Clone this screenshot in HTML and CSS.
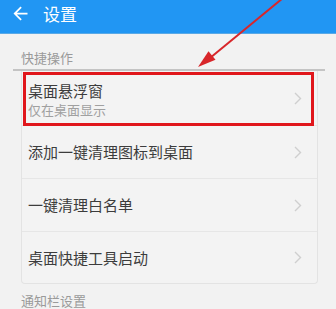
FILE: index.html
```html
<!DOCTYPE html>
<html lang="zh">
<head>
<meta charset="utf-8">
<link rel="stylesheet" href="styles.css">
</head>
<body>
<div class="page">
  <header class="topbar">
    <svg class="back" viewBox="0 0 24 24" width="21" height="21"><path d="M20 11H7.83l5.59-5.59L12 4l-8 8 8 8 1.41-1.41L7.83 13H20v-2z" fill="#fff"/></svg>
    <span class="title">设置</span>
  </header>
  <div class="section-label">快捷操作</div>
  <div class="group">
    <div class="card">
      <div class="item item-first">
        <div class="texts">
          <div class="item-title">桌面悬浮窗</div>
          <div class="item-sub">仅在桌面显示</div>
        </div>
        <svg class="chev" viewBox="0 0 8 13" width="8" height="13"><path d="M1 1l5.5 5.5L1 12" fill="none" stroke="#cfcfcf" stroke-width="1.4"/></svg>
        <div class="highlight"></div>
      </div>
      <div class="item">
        <div class="item-title">添加一键清理图标到桌面</div>
        <svg class="chev" viewBox="0 0 8 13" width="8" height="13"><path d="M1 1l5.5 5.5L1 12" fill="none" stroke="#cfcfcf" stroke-width="1.4"/></svg>
      </div>
      <div class="item">
        <div class="item-title">一键清理白名单</div>
        <svg class="chev" viewBox="0 0 8 13" width="8" height="13"><path d="M1 1l5.5 5.5L1 12" fill="none" stroke="#cfcfcf" stroke-width="1.4"/></svg>
      </div>
      <div class="item item-last">
        <div class="item-title">桌面快捷工具启动</div>
        <svg class="chev" viewBox="0 0 8 13" width="8" height="13"><path d="M1 1l5.5 5.5L1 12" fill="none" stroke="#cfcfcf" stroke-width="1.4"/></svg>
      </div>
    </div>
  </div>
  <div class="section-label section-label-2">通知栏设置</div>
  <svg class="annot" viewBox="0 0 336 309" width="336" height="309">
    <line x1="283" y1="-2" x2="210" y2="58" stroke="#d8262a" stroke-width="2"/>
    <polygon points="198,67 215.5,59.8 208.5,51.2" fill="#d8262a"/>
  </svg>
</div>
</body>
</html>
```
FILE: styles.css
```css
html, body {
  margin: 0;
  padding: 0;
  background: #f2f2f2;
}
.page {
  position: relative;
  width: 336px;
  height: 309px;
  overflow: hidden;
  font-family: "Noto Sans CJK SC", "Noto Sans", sans-serif;
}
.topbar {
  height: 34px;
  box-sizing: border-box;
  background: #2196f3;
  border-bottom: 1px solid #5aa9e6;
  display: flex;
  align-items: center;
  padding-bottom: 6px;
}
.back {
  margin-left: 10px;
  display: block;
}
.title {
  margin-left: 12px;
  color: #fff;
  font-size: 17px;
  line-height: 20px;
}
.section-label {
  color: #9a9a9a;
  font-size: 13px;
  line-height: 16px;
  padding: 16px 0 3px 21px;
}
.section-label-2 {
  padding: 9px 0 0 21px;
}
.group {
  margin: 0 11px 0 13px;
  border-top: 2px solid #c4c4c4;
}
.card {
  margin: 0 7px 0 8px;
  border: 1px solid #e3e3e3;
  border-top: none;
  border-radius: 0 0 4px 4px;
  background: #f3f3f3;
}
.item {
  position: relative;
  box-sizing: border-box;
  display: flex;
  align-items: center;
  justify-content: space-between;
  height: 53px;
  padding: 0 15px 0 6px;
  border-bottom: 1px solid #e6e6e6;
}
.item-first {
  height: 55px;
}
.item-last {
  height: 51px;
  border-bottom: none;
}
.texts {
  padding-top: 4px;
}
.item-title {
  color: #3c3c3c;
  font-size: 15px;
  line-height: 20px;
}
.item-sub {
  color: #a0a0a0;
  font-size: 13px;
  line-height: 18px;
}
.chev {
  display: block;
}
.highlight {
  position: absolute;
  left: 1px;
  top: 1px;
  width: 291px;
  height: 54px;
  border: 3px solid #e0161b;
  box-sizing: border-box;
}
.annot {
  position: absolute;
  left: 0;
  top: 0;
  pointer-events: none;
}
```
